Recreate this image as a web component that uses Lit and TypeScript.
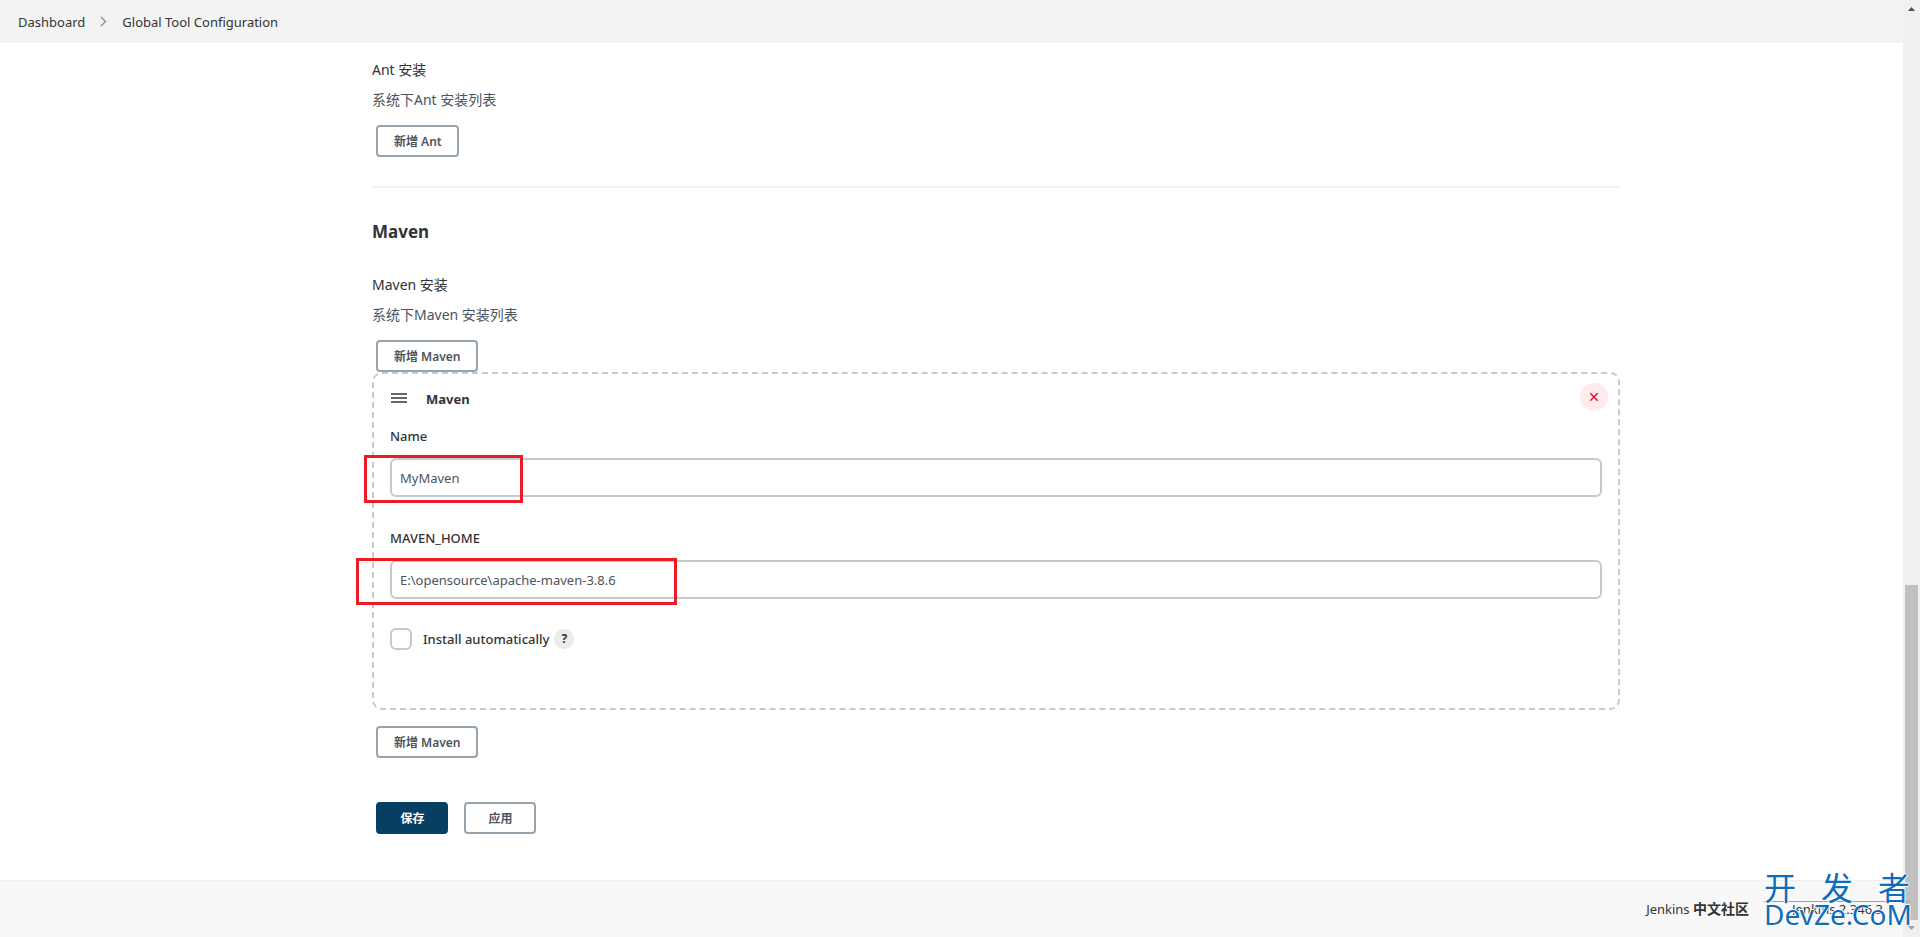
import { LitElement, html, css } from "lit";
import { customElement, property, state } from "lit/decorators.js";

@customElement("app-root")
export class AppRoot extends LitElement {
  @property() mavenName = "MyMaven";
  @property() mavenHome = "E:\\opensource\\apache-maven-3.8.6";
  @state() private autoInstall = false;

  static styles = css`
    :host {
      display: flex;
      position: relative;
      min-height: 100vh;
      overflow: hidden;
      background: #fff;
      color: #333;
      font-family: "Noto Sans", "Noto Sans CJK SC", sans-serif;
      font-size: 13px;
      line-height: 20px;
    }
    * { box-sizing: border-box; }
    a { color: inherit; text-decoration: none; }
    .page { flex: 1; min-width: 0; display: flex; flex-direction: column; }
    .crumbs {
      display: flex;
      align-items: center;
      gap: 15px;
      height: 43px;
      padding: 0 18px;
      background: #f3f3f3;
    }
    .crumbs svg { display: block; }
    main { flex: 1; padding: 17px 283px 46px 372px; }
    h2 { margin: 0; font-size: 17px; line-height: 24px; font-weight: 700; }
    h3 { margin: 0; font-size: 14px; line-height: 20px; font-weight: 400; }
    .desc { margin: 10px 0 15px; color: #4d545d; font-size: 14px; }
    hr { margin: 29px 0 32px; border: 0; height: 2px; background: #f3f3f3; }
    h2 + h3 { margin-top: 31px; }
    button { font: inherit; cursor: pointer; }
    .btn {
      display: block;
      height: 32px;
      margin-left: 4px;
      padding: 2px 15px 0 16px;
      border: 2px solid #98a4ad;
      border-radius: 4px;
      background: #fff;
      color: #4d545d;
      font-size: 12px;
      line-height: 20px;
      font-weight: 600;
    }
    .item {
      padding: 9px 16px 58px;
      border: 2px dashed #c1cbd0;
      border-radius: 10px;
    }
    .head { display: flex; align-items: center; gap: 19px; height: 32px; margin-bottom: 11px; padding-left: 1px; }
    .head svg { display: block; }
    .title { flex: 1; font-weight: 700; }
    .remove {
      display: grid;
      place-items: center;
      align-self: flex-start;
      width: 28px;
      height: 28px;
      margin-right: -6px;
      padding: 0;
      border: 0;
      border-radius: 50%;
      background: #fdebee;
    }
    .label { display: block; margin-bottom: 12px; font-weight: 500; }
    .field { position: relative; margin-bottom: 31px; }
    .field.last { margin-bottom: 29px; }
    .text {
      display: block;
      width: 100%;
      height: 39px;
      padding: 0 8px;
      border: 2px solid #c1cbd0;
      border-radius: 6px;
      background: #fff;
      color: #4d545d;
      font: inherit;
    }
    .mark { position: absolute; border: 3px solid #ed1c24; pointer-events: none; }
    .mark.name { left: -26px; bottom: -6px; width: 159px; height: 48px; }
    .mark.home { left: -34px; bottom: -6px; width: 321px; height: 47px; }
    .check { display: flex; align-items: center; height: 22px; }
    .check label { display: flex; align-items: center; gap: 11px; font-weight: 500; }
    .check input {
      appearance: none;
      width: 22px;
      height: 22px;
      margin: 0;
      border: 2px solid #c1cbd0;
      border-radius: 6px;
      background: #fff;
    }
    .help {
      width: 20px;
      height: 20px;
      margin-left: 5px;
      padding: 0;
      border: 0;
      border-radius: 50%;
      background: #ebebeb;
      color: #333;
      font-size: 12px;
      line-height: 20px;
      font-weight: 700;
    }
    .again { margin-top: 16px; }
    .actions { display: flex; gap: 12px; margin-top: 44px; }
    .actions .btn { width: 72px; }
    .actions .save { background: #063f62; border-color: #063f62; color: #fff; font-weight: 700; }
    footer {
      display: flex;
      align-items: center;
      justify-content: flex-end;
      gap: 43px;
      height: 57px;
      padding-right: 20px;
      border-top: 1px solid #efefef;
      background: #f8f8f8;
    }
    footer b { font-size: 14px; font-weight: 600; }
    .scroll {
      display: flex;
      flex-direction: column;
      align-items: center;
      justify-content: space-between;
      width: 17px;
      background: #f0f0f0;
    }
    .scroll svg { display: block; }
    .thumb { width: 13px; height: 335px; margin-top: auto; background: #c1c1c1; }
    .stamp {
      position: absolute;
      right: 10px;
      bottom: 10px;
      width: 146px;
      color: #0f6cba;
      pointer-events: none;
      text-shadow: 1px 0 #fff, -1px 0 #fff, 0 1px #fff, 0 -1px #fff;
    }
    .han { display: flex; justify-content: space-between; height: 30px; font-size: 32px; line-height: 32px; border-bottom: 1px solid #4db8ef; }
    .latin { display: block; font-size: 28px; line-height: 25px; }
  `;

  render() {
    return html`
      <div class="page">
        <nav class="crumbs" aria-label="breadcrumb">
          <a href="#dashboard">Dashboard</a>
          <svg width="7" height="12" viewBox="0 0 7 12" fill="none" stroke="#888" stroke-width="1.2"><path d="M1 1 5.500 5.500 1 10" /></svg>
          <a href="#tools">Global Tool Configuration</a>
        </nav>
        <main>
          <h3>Ant 安装</h3>
          <p class="desc">系统下Ant 安装列表</p>
          <button class="btn" type="button">新增 Ant</button>
          <hr />
          <h2>Maven</h2>
          <h3>Maven 安装</h3>
          <p class="desc">系统下Maven 安装列表</p>
          <button class="btn" type="button">新增 Maven</button>
          <section class="item">
            <div class="head">
              <svg width="16" height="12" viewBox="0 0 16 12" stroke="#333" stroke-width="1.3"><path d="M0 1h16M0 5h16M0 9h16" /></svg>
              <span class="title">Maven</span>
              <button class="remove" type="button" aria-label="Delete">
                <svg width="10" height="10" viewBox="0 0 10 10" stroke="#e6001f" stroke-width="1.3"><path d="M1.300 1.300l7.400 7.400M8.700 1.300l-7.400 7.400" /></svg>
              </button>
            </div>
            <label class="label" for="name">Name</label>
            <div class="field">
              <input class="text" id="name" type="text" .value=${this.mavenName} />
              <span class="mark name"></span>
            </div>
            <label class="label" for="home">MAVEN_HOME</label>
            <div class="field last">
              <input class="text" id="home" type="text" .value=${this.mavenHome} />
              <span class="mark home"></span>
            </div>
            <div class="check">
              <label>
                <input type="checkbox" .checked=${this.autoInstall}
                  @change=${(e: Event) => (this.autoInstall = (e.target as HTMLInputElement).checked)} />
                Install automatically
              </label>
              <button class="help" type="button">?</button>
            </div>
          </section>
          <button class="btn again" type="button">新增 Maven</button>
          <div class="actions">
            <button class="btn save" type="submit">保存</button>
            <button class="btn" type="button">应用</button>
          </div>
        </main>
        <footer>
          <a href="#community">Jenkins <b>中文社区</b></a>
          <a href="#version">Jenkins 2.346.3</a>
        </footer>
      </div>
      <div class="scroll" aria-hidden="true">
        <svg width="17" height="17" viewBox="0 0 17 17" fill="#505050"><path d="M5 11h7L8.500 7z" /></svg>
        <div class="thumb"></div>
        <svg width="17" height="17" viewBox="0 0 17 17" fill="#a3a3a3"><path d="M5 6h7L8.500 10z" /></svg>
      </div>
      <div class="stamp">
        <div class="han"><span>开</span><span>发</span><span>者</span></div>
        <span class="latin">DevZe.CoM</span>
      </div>
    `;
  }
}
